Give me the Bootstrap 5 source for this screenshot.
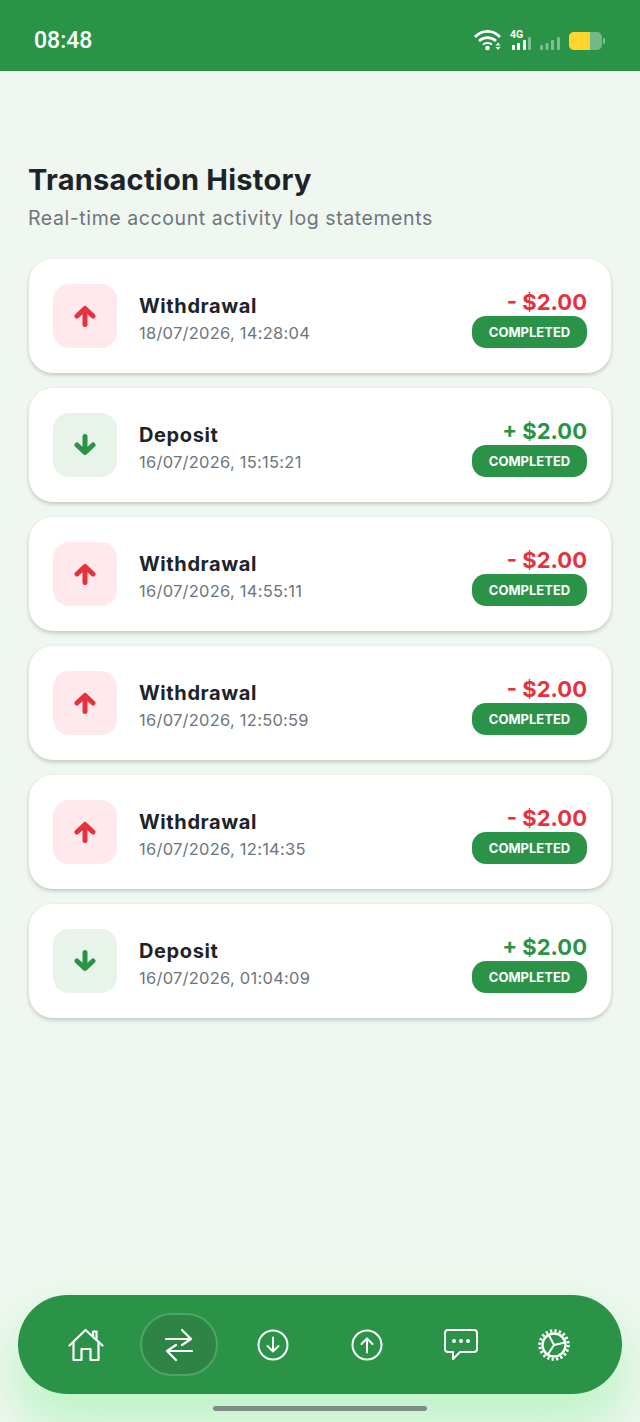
<!DOCTYPE html>
<html lang="en">
<head>
    <meta charset="UTF-8">
    <meta name="viewport" content="width=device-width, initial-scale=1.0">
    <title>Transaction History</title>
    <link href="https://cdn.jsdelivr.net/npm/bootstrap@5.3.3/dist/css/bootstrap.min.css" rel="stylesheet">
    <style>
        html, body { height: 100%; }
        body {
            width: 640px; height: 1422px; overflow: hidden;
            background: #f0f7f0;
            font-family: Inter, "Liberation Sans", sans-serif;
            color: #1d2429;
        }
        .app-shell { height: 1422px; }
        .status-bar { height: 71px; background: #2b9348; padding: 9px 33px 0 34px; }
        .status-time { font-family: Roboto, sans-serif; font-size: 23px; font-weight: 500; padding-top: 3px; }
        .page-title { font-size: 29px; font-weight: 700; line-height: 36px; letter-spacing: .25px; margin: 0 0 7px -1px; }
        .page-sub { font-size: 19.5px; line-height: 26px; color: #6c757d; letter-spacing: .58px; margin: 0 0 0 -1px; }
        .page-main { padding: 91px 29px 0 29px; }
        .tx-list { margin-top: 28px; gap: 14.8px; }
        .tx-card { height: 114.2px; border-radius: 24px; padding: 0 24px 0 24px; box-shadow: 0 2px 4px rgba(0,0,0,.2); }
        .tx-icon { width: 64px; height: 64px; border-radius: 16px; margin-right: 22px; }
        .tx-out .tx-icon { background: #ffe9ec; }
        .tx-in .tx-icon { background: #e8f3ea; }
        .tx-text { padding-top: 5px; }
        .tx-side { padding-top: 4px; }
        .tx-name { font-size: 20px; font-weight: 700; line-height: 26px; letter-spacing: .6px; }
        .tx-date { font-size: 16.5px; line-height: 22px; color: #6c757d; margin-top: 3px; letter-spacing: .25px; }
        .tx-amount { font-size: 22px; font-weight: 700; line-height: 28px; }
        .tx-out .tx-amount { color: #e5323e; }
        .tx-in .tx-amount { color: #2b9348; }
        .tx-status { width: 115px; height: 32px; border-radius: 14px; background: #2b9348; color: #fff; font-size: 13px; font-weight: 700; line-height: 32px; text-align: center; }
        .bottom-nav { left: 18px; top: 1295px; width: 604px; height: 99px; border-radius: 50px; background: #2b9348; box-shadow: 0 28px 50px 6px rgba(110,240,135,.38); }
        .nav-cell { width: 93.7px; height: 63px; }
        .nav-active { width: 78px; height: 63px; border-radius: 32px; background: #2e8444; border: 2px solid #4da565; }
        .home-bar { left: 213px; top: 1406px; width: 214px; height: 5px; border-radius: 3px; background: #7f8c85; }
    </style>
</head>
<body>
    <div class="app-shell position-relative">
        <div class="status-bar d-flex align-items-center justify-content-between text-white">
            <div class="status-time">08:48</div>
            <svg width="137" height="30" viewBox="0 0 137 30" fill="none">
                <path d="M5 12 C12 4.500 23 4.500 30 12" stroke="#fff" stroke-width="2.800"/>
                <path d="M9 16 C14 11.500 21 11.500 26 16" stroke="#fff" stroke-width="2.600"/>
                <path d="M13 19.500 C15.500 17.500 19.500 17.500 22 19.500" stroke="#fff" stroke-width="2"/>
                <circle cx="17.500" cy="23" r="2.300" fill="#fff"/>
                <path d="M25.500 20.500 l2.500 -3 2.500 3z M25.500 22 l2.500 3 2.500 -3z" fill="#fff"/>
                <text x="40" y="13" fill="#fff" font-family="Roboto, sans-serif" font-size="10.500" font-weight="700">4G</text>
                <rect x="42" y="20" width="3" height="5" rx="1" fill="#fff"/>
                <rect x="47" y="18" width="3" height="7" rx="1" fill="#fff"/>
                <rect x="53" y="15" width="3" height="10" rx="1" fill="#fff"/>
                <rect x="58" y="12" width="3" height="13" rx="1" fill="#fff" opacity=".4"/>
                <rect x="70" y="20" width="3" height="5" rx="1" fill="#fff" opacity=".4"/>
                <rect x="75.500" y="18" width="3" height="7" rx="1" fill="#fff" opacity=".4"/>
                <rect x="81" y="15" width="3" height="10" rx="1" fill="#fff" opacity=".4"/>
                <rect x="87" y="12" width="3" height="13" rx="1" fill="#fff" opacity=".4"/>
                <rect x="99" y="7" width="33" height="18" rx="5" fill="#fff" opacity=".35"/>
                <path d="M104 7 h16 v18 h-16 a5 5 0 0 1 -5 -5 v-8 a5 5 0 0 1 5 -5z" fill="#ffd52e"/>
                <rect x="133" y="13" width="2" height="6" rx="1" fill="#fff" opacity=".4"/>
            </svg>
        </div>

        <main class="page-main">
            <h1 class="page-title">Transaction History</h1>
            <p class="page-sub">Real-time account activity log statements</p>

            <div id="txList" class="tx-list d-flex flex-column"></div>
        </main>

        <nav class="bottom-nav position-absolute d-flex align-items-center justify-content-center">
            <div class="nav-cell d-flex align-items-center justify-content-center">
                <svg width="36" height="34" viewBox="0 0 36 34" fill="none" stroke="#fff" stroke-width="2.200" stroke-linejoin="round" stroke-linecap="round">
                    <path d="M1.500 17.500 L17.500 2 L34.500 17.500"/>
                    <path d="M5.500 14 V32 H13.500 V21 H22.500 V32 H30.500 V14"/>
                    <path d="M25 8 V3.500 H28.500 V12"/>
                </svg>
            </div>
            <div class="nav-cell d-flex align-items-center justify-content-center">
                <div class="nav-active d-flex align-items-center justify-content-center">
                    <svg width="28" height="34" viewBox="0 0 28 34" fill="none" stroke="#fff" stroke-width="2.200" stroke-linecap="round" stroke-linejoin="round">
                        <path d="M1 11 H26 L17 2 M26 11 L17 17"/>
                        <path d="M27 23 H2 L11 17 M2 23 L11 32"/>
                    </svg>
                </div>
            </div>
            <div class="nav-cell d-flex align-items-center justify-content-center">
                <svg width="32" height="32" viewBox="0 0 32 32" fill="none" stroke="#fff" stroke-width="2" stroke-linecap="round" stroke-linejoin="round">
                    <circle cx="16" cy="16" r="14.500"/>
                    <path d="M16 8.500 V22.500 M10.500 17 L16 22.500 L21.500 17"/>
                </svg>
            </div>
            <div class="nav-cell d-flex align-items-center justify-content-center">
                <svg width="32" height="32" viewBox="0 0 32 32" fill="none" stroke="#fff" stroke-width="2" stroke-linecap="round" stroke-linejoin="round">
                    <circle cx="16" cy="16" r="14.500"/>
                    <path d="M16 23.500 V9.500 M10.500 15 L16 9.500 L21.500 15"/>
                </svg>
            </div>
            <div class="nav-cell d-flex align-items-center justify-content-center">
                <svg width="34" height="32" viewBox="0 0 34 32" fill="none" stroke="#fff" stroke-width="2" stroke-linejoin="round">
                    <path d="M4 1 H30 Q33 1 33 4 V20 Q33 23 30 23 H16 L9 30 V23 H4 Q1 23 1 20 V4 Q1 1 4 1z"/>
                    <circle cx="10" cy="12" r="2" fill="#fff" stroke="none"/>
                    <circle cx="17" cy="12" r="2" fill="#fff" stroke="none"/>
                    <circle cx="24" cy="12" r="2" fill="#fff" stroke="none"/>
                </svg>
            </div>
            <div class="nav-cell d-flex align-items-center justify-content-center">
                <svg width="32" height="32" viewBox="0 0 32 32" fill="none" stroke="#fff">
                    <circle cx="16" cy="16" r="11.500" stroke-width="2.400"/>
                    <path stroke-width="2" d="M16 16 L10.500 5.500 M16 16 L27 13.500 M16 16 L9.500 26"/>
                    <circle cx="16" cy="16" r="14.300" stroke-width="3" stroke-dasharray="2.300 2.190"/>
                </svg>
            </div>
        </nav>
        <div class="home-bar position-absolute"></div>
    </div>

    <script src="https://cdn.jsdelivr.net/npm/bootstrap@5.3.3/dist/js/bootstrap.bundle.min.js"></script>
    <script>
        const movimientos = [
            ["out", "18/07/2026, 14:28:04"],
            ["in", "16/07/2026, 15:15:21"],
            ["out", "16/07/2026, 14:55:11"],
            ["out", "16/07/2026, 12:50:59"],
            ["out", "16/07/2026, 12:14:35"],
            ["in", "16/07/2026, 01:04:09"]
        ];
        const flecha = {
            out: `<svg width="22" height="22" viewBox="0 0 22 22" fill="none" stroke="#e5323e" stroke-width="5" stroke-linecap="round" stroke-linejoin="round"><path d="M11 19.500 V4 M3 11 L11 3.500 L19 11"/></svg>`,
            in: `<svg width="22" height="22" viewBox="0 0 22 22" fill="none" stroke="#2b9348" stroke-width="5" stroke-linecap="round" stroke-linejoin="round"><path d="M11 2.500 V18 M3 11 L11 18.500 L19 11"/></svg>`
        };
        document.getElementById("txList").innerHTML = movimientos.map(([tipo, fecha]) => `
            <div class="tx-card bg-white d-flex align-items-center tx-${tipo}">
                <div class="tx-icon d-flex align-items-center justify-content-center flex-shrink-0">${flecha[tipo]}</div>
                <div class="tx-text flex-grow-1">
                    <div class="tx-name">${tipo === "out" ? "Withdrawal" : "Deposit"}</div>
                    <div class="tx-date">${fecha}</div>
                </div>
                <div class="tx-side text-end">
                    <div class="tx-amount">${tipo === "out" ? "- $2.00" : "+ $2.00"}</div>
                    <div class="tx-status">COMPLETED</div>
                </div>
            </div>`).join("");
    </script>
</body>
</html>
